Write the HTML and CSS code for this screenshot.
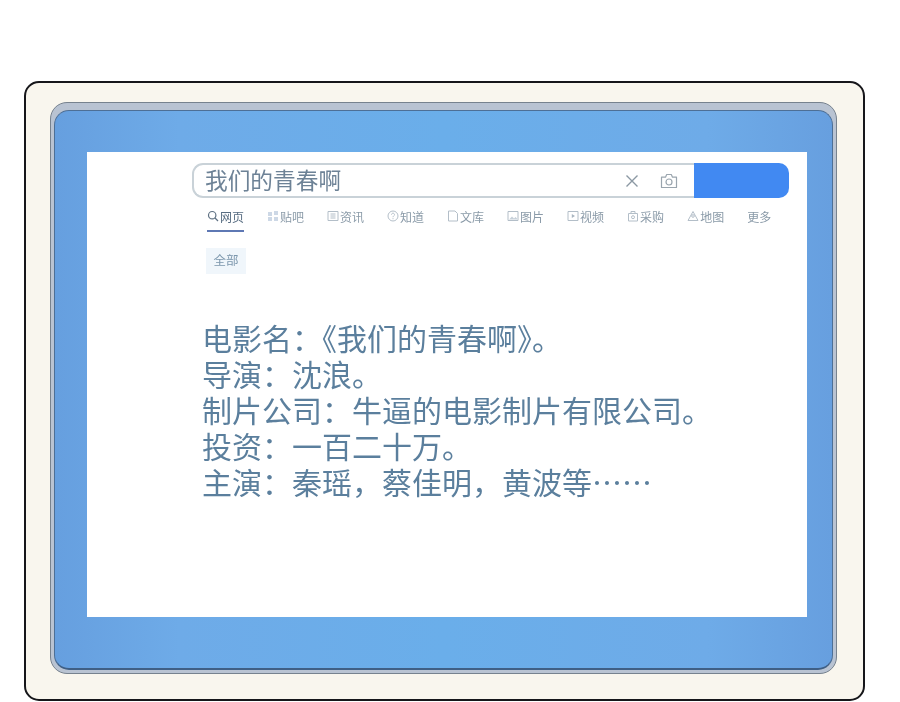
FILE: index.html
```html
<!DOCTYPE html>
<html lang="zh-CN">
<head>
    <meta charset="UTF-8">
    <title>我们的青春啊</title>
    <link rel="stylesheet" href="styles.css">
</head>
<body>
    <div class="monitor">
        <div class="bezel">
            <div class="screen">
                <div class="page">
                    <div class="searchbar">
                        <div class="searchbox">
                            <span class="query">我们的青春啊</span>
                            <svg class="clear" width="14" height="14" viewBox="0 0 14 14"><path d="M1.5 1.5l11 11M12.5 1.5l-11 11" stroke="#8b98a3" stroke-width="1.4" fill="none"/></svg>
                            <svg class="camera" width="18" height="16" viewBox="0 0 18 16"><path d="M1.5 4.2h4l1.2-2.7h4.6l1.2 2.7h4v10.3h-15z" stroke="#9aa5ae" stroke-width="1.2" fill="none" stroke-linejoin="round"/><circle cx="9" cy="9" r="3" stroke="#9aa5ae" stroke-width="1.2" fill="none"/></svg>
                        </div>
                        <div class="searchbtn"></div>
                    </div>
                    <div class="tabs">
                        <div class="tab active">
                            <svg width="12" height="12" viewBox="0 0 12 12"><circle cx="5.2" cy="5.2" r="3.7" stroke="#5f7183" stroke-width="1.2" fill="none"/><path d="M8 8l3 3" stroke="#5f7183" stroke-width="1.2"/></svg>
                            <span>网页</span>
                        </div>
                        <div class="tab">
                            <svg width="12" height="12" viewBox="0 0 12 12"><path d="M1 2h4v4H1zM7 1h4v4H7zM1 7h4v4H1zM7 7h4v4H7z" fill="#cdd8e6"/></svg>
                            <span>贴吧</span>
                        </div>
                        <div class="tab">
                            <svg width="12" height="12" viewBox="0 0 12 12"><path d="M1 1.5h10v9H1zM3.5 4h5M3.5 6h5M3.5 8h5" stroke="#b3bec8" fill="none"/></svg>
                            <span>资讯</span>
                        </div>
                        <div class="tab">
                            <svg width="12" height="12" viewBox="0 0 12 12"><circle cx="6" cy="6" r="5" stroke="#b3bec8" fill="none"/><path d="M4.5 4.7c0-2 3-2 3 0 0 1.200-1.500 1.200-1.500 2.500M6 8.200v1" stroke="#b3bec8" fill="none"/></svg>
                            <span>知道</span>
                        </div>
                        <div class="tab">
                            <svg width="12" height="12" viewBox="0 0 12 12"><path d="M1.500 1h6.500l2.500 2.500V11h-9z" stroke="#b3bec8" fill="none"/></svg>
                            <span>文库</span>
                        </div>
                        <div class="tab">
                            <svg width="12" height="12" viewBox="0 0 12 12"><path d="M1 1.500h10v9H1z" stroke="#b3bec8" fill="none"/><path d="M2 9.500l3-3 2 2 1.500-1.500 1.500 1.500v1z" fill="#c6d0d9"/></svg>
                            <span>图片</span>
                        </div>
                        <div class="tab">
                            <svg width="12" height="12" viewBox="0 0 12 12"><path d="M1 1.500h10v9H1z" stroke="#b3bec8" fill="none"/><path d="M4.800 4v4l3.200-2z" fill="#aab6c1"/></svg>
                            <span>视频</span>
                        </div>
                        <div class="tab">
                            <svg width="12" height="12" viewBox="0 0 12 12"><path d="M1.500 3.500h9V11h-9zM4 3.500V1.500h4v2" stroke="#b3bec8" fill="none"/><circle cx="6" cy="7.200" r="1.500" stroke="#b3bec8" fill="none"/></svg>
                            <span>采购</span>
                        </div>
                        <div class="tab">
                            <svg width="12" height="12" viewBox="0 0 12 12"><path d="M6 1.500l2.500 4.500 2.500 4.500H1L3.500 6z" stroke="#b3bec8" fill="none"/><circle cx="6" cy="6" r="1.300" stroke="#b3bec8" fill="none"/></svg>
                            <span>地图</span>
                        </div>
                        <div class="tab">
                            <span>更多</span>
                        </div>
                    </div>
                    <div class="chip">全部</div>
                    <div class="info">
                        <p>电影名：《我们的青春啊》。</p>
                        <p>导演：沈浪。</p>
                        <p>制片公司：牛逼的电影制片有限公司。</p>
                        <p>投资：一百二十万。</p>
                        <p>主演：秦瑶，蔡佳明，黄波等<span class="dots">……</span></p>
                    </div>
                </div>
            </div>
        </div>
    </div>
</body>
</html>
```

FILE: styles.css
```css
body {
    margin: 0;
    padding: 81px 0 0 24px;
    background-color: #fff;
    font-family: "Liberation Sans", "Noto Sans CJK SC", sans-serif;
}

.monitor {
    box-sizing: border-box;
    width: 841px;
    height: 620px;
    padding: 19px 26px 25px 24px;
    background-color: #f9f6ee;
    border: 2px solid #16161a;
    border-radius: 15px;
}

.bezel {
    box-sizing: border-box;
    height: 572px;
    padding: 7px 3px 3px;
    background-color: #b9c3d2;
    border: 1px solid #77828e;
    border-radius: 17px;
}

.screen {
    box-sizing: border-box;
    height: 560px;
    padding: 41px 25px 51px 32px;
    background: linear-gradient(90deg, #669fdf 0%, #6eabe8 16%, #6aaeea 50%, #6eabe8 84%, #679fdf 100%);
    border: 1px solid #4d6f96;
    border-bottom: 2px solid #3f5f85;
    border-radius: 15px;
}

.page {
    box-sizing: border-box;
    height: 465px;
    padding: 11px 18px 0 105px;
    background-color: #fff;
}

.searchbar {
    display: flex;
    height: 35px;
}

.searchbox {
    box-sizing: border-box;
    flex: 1;
    display: flex;
    align-items: center;
    padding: 0 16px 0 11px;
    background-color: #fff;
    border: 2px solid #c9d2d8;
    border-right: none;
    border-radius: 11px 0 0 11px;
}

.query {
    flex: 1;
    padding-bottom: 3px;
    font-size: 22.7px;
    color: #6d8296;
    filter: blur(0.4px);
}

.clear {
    margin-right: 21px;
}

.searchbtn {
    width: 95px;
    background-color: #4189f2;
    border-radius: 0 10px 10px 0;
}

.tabs {
    display: flex;
    gap: 23px;
    margin: 6px 0 0 15px;
    white-space: nowrap;
}

.tab {
    display: flex;
    align-items: center;
    gap: 1px;
    height: 24px;
    padding-bottom: 4px;
    font-size: 12px;
    color: #8a9aa8;
    filter: blur(0.3px);
}

.tab.active {
    color: #586d82;
    border-bottom: 2px solid #5e78b4;
    padding-bottom: 2px;
}

.chip {
    box-sizing: border-box;
    width: 40px;
    height: 26px;
    margin: 16px 0 0 14px;
    background-color: #f0f6fb;
    font-size: 12.5px;
    line-height: 26px;
    text-align: center;
    color: #7c97ad;
    filter: blur(0.3px);
}

.info {
    margin: 48px 0 0 10px;
    font-size: 30px;
    line-height: 36px;
    color: #5b7f9d;
    filter: blur(0.4px);
}

.info p {
    margin: 0;
}

/* Liberation has its own ellipsis, sat on the baseline */
.dots {
    font-family: "Noto Sans CJK SC", sans-serif;
    line-height: 0;
}
```
